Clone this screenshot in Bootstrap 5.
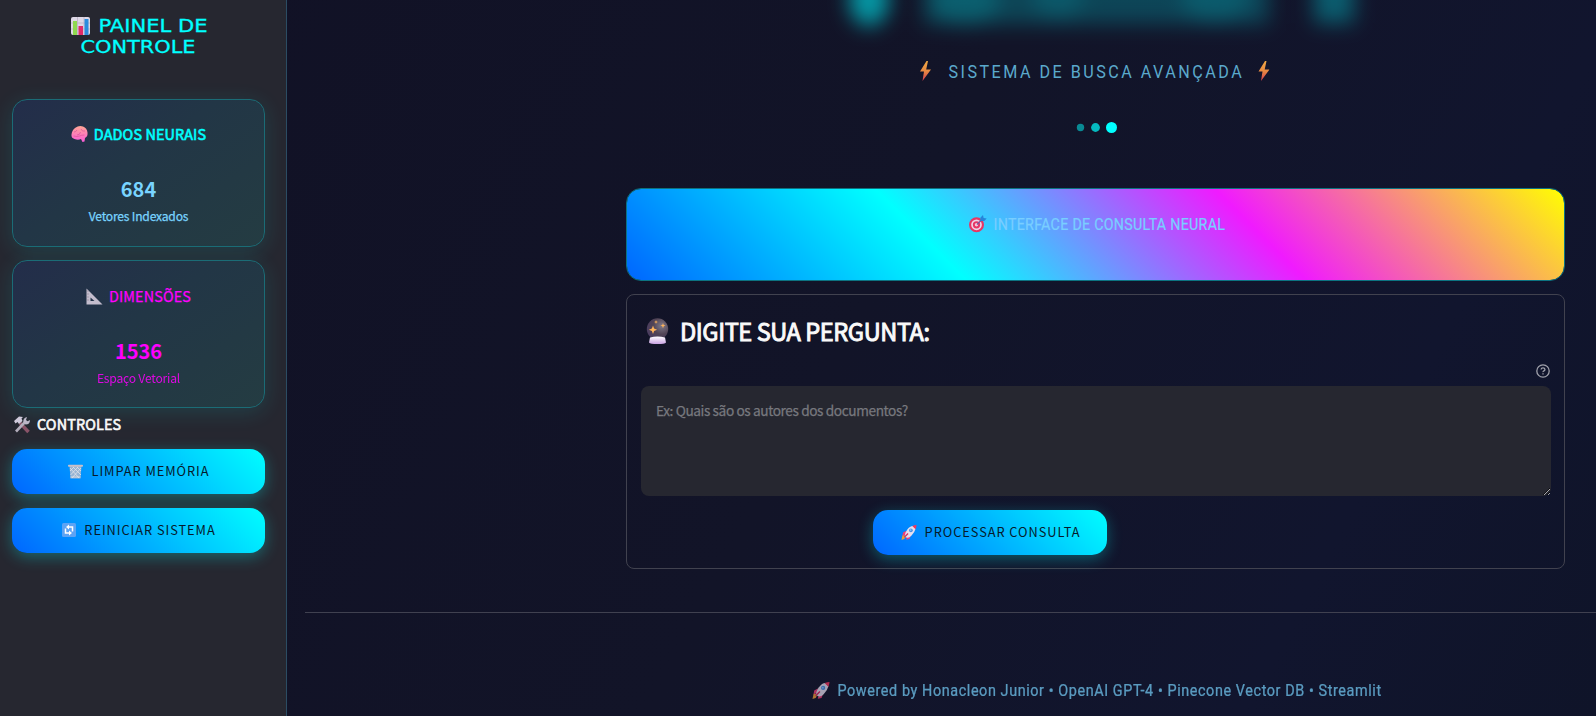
<!DOCTYPE html>
<html lang="pt-BR">
<head>
<meta charset="utf-8">
<meta name="viewport" content="width=device-width, initial-scale=1">
<title>Painel de Controle</title>
<link rel="stylesheet" href="https://cdn.jsdelivr.net/npm/bootstrap@5.3.0/dist/css/bootstrap.min.css">
<style>
html,body{height:100%}
body{margin:0;overflow:hidden;color:#fafafa;font-family:"Noto Sans CJK JP","Noto Sans",sans-serif;
 background:linear-gradient(118deg,#111125 0%,#121428 52%,#11152e 82%,#0f1429 100%)}
svg{display:block;flex:none;overflow:visible}
.fit{font-family:Roboto,"Noto Sans",sans-serif}
.side{width:287px;height:716px;background:#262730;border-right:1px solid #2b4c63;padding:0 21px 0 12px;flex:none}
.side-title{height:99px;padding-top:15px}
.metric{height:148px;border:1px solid #1b6c76;border-radius:15px;padding-top:22px;
 background:linear-gradient(145deg,#232d4a 0%,#223646 45%,#243c42 100%);box-shadow:0 4px 22px rgba(0,255,255,.12)}
.metric+.metric{margin-top:13px;padding-top:23px}
.m-head{height:24px;line-height:24px;font-size:14.4px;gap:6px;letter-spacing:.12px}
.m-val{margin-top:27px;height:32px;line-height:32px;font-size:20px;font-weight:700}
.m-cap{height:20px;line-height:20px;font-size:12.1px;margin-top:1px;letter-spacing:-.2px}
.semi{-webkit-text-stroke:.6px currentColor}
.medium{-webkit-text-stroke:.25px currentColor}
.cy{color:#0ff}.mg{color:#f0f}.sky{color:#79d4ff}
.ctl{height:24px;line-height:24px;margin:4px 0 13px 2px;font-size:14.4px;gap:7px;letter-spacing:.12px}
.neon{height:45px;border:0;border-radius:15px;background:linear-gradient(45deg,#06f,#0ff);color:#061a2b!important;
 box-shadow:0 4px 15px rgba(0,255,255,.3);font-size:12.8px;letter-spacing:.95px;gap:8px;padding:0 0 1px 1px}
.neon+.neon{margin-top:14px}
.stage{flex:1;min-width:0}
.column-main{width:939px;margin-left:339px}
.hero{height:188px;padding-top:58px}
.glow{position:absolute;left:800px;top:0;pointer-events:none}
.banner{height:93px;border:1px solid #0c7381;border-radius:15px;padding-top:26px;
 background:linear-gradient(45deg,#06f 0%,#0ff 33%,#f01aff 66%,#ff0 100%) padding-box}
.ask{height:275px;margin-top:13px;border:1px solid #41424f;border-radius:8px;padding:0 13px 0 14px}
.ask h2{height:40px;line-height:40px;font-size:23.6px;margin:16px 0 0 5px;gap:11px;font-weight:400;letter-spacing:-.42px;-webkit-text-stroke:.95px currentColor}
.help{height:16px;margin-top:13px;padding-right:1px}
.field{height:110px;margin-top:6px;background:#262730!important;border:0;border-radius:8px;padding:12px 15px;color:#fafafa;font-size:13.7px;line-height:24px;resize:vertical;letter-spacing:-.41px}
.field::placeholder{color:#77787e;opacity:1;-webkit-text-stroke:.25px #77787e}
.send{width:234px;margin:14px 0 0 232px}
.rule{height:1px;background:#404150;margin:43px 0 0 18px}
.foot{margin-top:68px;height:20px;opacity:.7}
</style>
</head>
<body class="d-flex">
<svg width="0" height="0" class="position-absolute" aria-hidden="true"><defs>
<linearGradient id="bolt" x1="0" y1="0" x2="0" y2="1"><stop offset="0" stop-color="#f0a843"/><stop offset=".5" stop-color="#e88a42"/><stop offset="1" stop-color="#d33b50"/></linearGradient>
<linearGradient id="brain" x1="0" y1="0" x2="0" y2="1"><stop offset="0" stop-color="#ffa795"/><stop offset="1" stop-color="#fb5bd8"/></linearGradient>
<linearGradient id="base" x1="0" y1="0" x2="0" y2="1"><stop offset="0" stop-color="#fff"/><stop offset="1" stop-color="#c9a2e2"/></linearGradient>
<radialGradient id="orb" cx=".7" cy=".35" r=".8"><stop offset="0" stop-color="#807a88"/><stop offset=".5" stop-color="#514455"/><stop offset="1" stop-color="#493b62"/></radialGradient>
<filter id="soft" x="-30%" y="-100%" width="160%" height="300%"><feGaussianBlur stdDeviation="10"/></filter>
<symbol id="rocket" viewBox="0 0 16 16"><path d="M1 11l4 0-2 4-3 1z" fill="#ee9a37"/><path d="M5 6L1.600 8 1 11.500l4-1.500zM10 11l-1.500 4-3.500 .800 1-4.500z" fill="#ee3f78"/><path d="M3.500 12.500Q3 9 6 5T12 1l3 3q-1 4-4.500 7.500T3.500 12.500z" fill="#e5dfee"/><path d="M11.500 1Q14 0 16 0q0 2-1 4.500z" fill="#f5355e"/><circle cx="10" cy="5.600" r="2" fill="#4b8fe2"/><circle cx="9.700" cy="5.300" r=".9" fill="#8fcaff"/><path d="M3 13l4-4" stroke="#d92861" stroke-width="1.400"/></symbol>
<symbol id="lightning" viewBox="0 0 12 20"><path d="M7.500 0L1 10.500h4L3.500 20 12 8.500H7.200L9 0z" fill="url(#bolt)"/></symbol>
</defs></svg>

<aside class="side">
 <div class="side-title">
  <svg width="253" height="50" viewBox="12 15 253 50" class="fit">
   <rect x="71" y="17" width="19" height="18" rx="2" fill="#ded8e6"/><path d="M71 23h19M71 29h19M77.500 17v18M84 17v18" stroke="#bcb3c6" stroke-width=".8"/>
   <rect x="73" y="21" width="4" height="14" fill="#8fd94f"/><rect x="78.500" y="26" width="4.500" height="9" fill="#e12b69"/><rect x="84.500" y="19" width="4" height="16" fill="#2b8cde"/>
   <g fill="#0ff" stroke="#0ff" stroke-width=".3" font-family="DejaVu Sans" font-size="17.400"><text x="98.500" y="32" textLength="109" lengthAdjust="spacingAndGlyphs">PAINEL DE</text><text x="80.500" y="53" textLength="115" lengthAdjust="spacingAndGlyphs">CONTROLE</text></g>
  </svg>
 </div>
 <div class="metric text-center">
  <div class="m-head d-flex justify-content-center align-items-center cy semi">
   <svg width="17" height="16" viewBox="0 0 17 16"><path d="M3.500 13Q0 12 .5 8.500 1 4 4 2q4-3 8-1.500 4 1.500 4.500 6 .5 4-2.500 5.500l-.5 3.500-2 .5-1.500-3Q7 14.500 3.500 13z" fill="url(#brain)"/><path d="M3 6q2 0 3-2M6 9q3 0 3.500-3M10 3q1 3 4 2M2.500 10q4 1 6 0t5-1" fill="none" stroke="#df599e" stroke-width=".8"/></svg><span>DADOS NEURAIS</span></div>
  <div class="m-val sky">684</div><div class="m-cap sky medium">Vetores Indexados</div>
 </div>
 <div class="metric text-center">
  <div class="m-head d-flex justify-content-center align-items-center mg medium">
   <svg width="17" height="17" viewBox="0 0 17 17"><path d="M.5.500L16.500 16.500H.5zM4.500 9.500v3.500h4z" fill="#c3bdcd" fill-rule="evenodd"/><path d="M1 3h2M1 6h2M1 9h2M1 12h2" stroke="#89828f" stroke-width=".6"/></svg><span>DIMENSÕES</span></div>
  <div class="m-val mg">1536</div><div class="m-cap mg" style="opacity:.85">Espaço Vetorial</div>
 </div>
 <div class="ctl d-flex align-items-center semi">
  <svg width="16" height="17" viewBox="0 0 16 17"><path d="M6 7l8.500 9" stroke="#8a5368" stroke-width="3.400"/><path d="M2 15.500L11 6" stroke="#b3adbb" stroke-width="2.600"/><path d="M9.500 6.500Q8.500 2 13 1l-1 3 1.500 1.300L16 4q0 4.500-4.500 4.500z" fill="#bdb7c8"/><path d="M0 5l5-4.500 4 .5-1.500 1.500 1 2.500L5 8 3.500 6 1.500 7.500z" fill="#d0cadb"/></svg><span>CONTROLES</span></div>
 <button class="btn neon w-100 d-flex justify-content-center align-items-center">
  <svg width="15" height="15" viewBox="0 0 15 15"><path d="M1.500 2h12l-1 12.500h-10z" fill="#97b4d3"/><path d="M2 4l9 10M5 3l8 8M9 3l4 4M13 4L4 14M10 3L2.500 11M6 3L2 7M2.500 13h10" stroke="#e3e2e9" stroke-width=".8"/><rect y=".7" width="15" height="2" rx=".8" fill="#c8c0c9"/></svg><span>LIMPAR MEMÓRIA</span></button>
 <button class="btn neon w-100 d-flex justify-content-center align-items-center">
  <svg width="14" height="14" viewBox="0 0 14 14"><rect width="14" height="14" rx="1.500" fill="#5da3f4"/><path d="M3.500 5.500v4.500H8M10.500 8.500V4H6" fill="none" stroke="#fff" stroke-width="1.500"/><path d="M7 1.500v5L4 4zM7 12.500v-5L10 10z" fill="#fff"/></svg><span>REINICIAR SISTEMA</span></button>
</aside>

<main class="stage">
 <svg class="glow" width="620" height="60" viewBox="800 0 620 60" aria-hidden="true"><g filter="url(#soft)" fill="#00c8d2">
  <ellipse cx="869" cy="0" rx="20" ry="26" opacity=".72"/><rect x="924" y="-30" width="345" height="54" opacity=".27"/><ellipse cx="965" cy="0" rx="34" ry="25" opacity=".2"/><ellipse cx="1058" cy="-4" rx="26" ry="22" opacity=".15"/><ellipse cx="1215" cy="-3" rx="34" ry="25" opacity=".17"/><rect x="1314" y="-30" width="40" height="53" opacity=".4"/></g></svg>
 <div class="column-main">
  <header class="hero">
   <svg width="939" height="90" viewBox="626 58 939 90" class="fit">
    <use href="#lightning" x="919" y="61" width="12" height="20"/><use href="#lightning" x="1257.500" y="61" width="12" height="20"/>
    <text transform="translate(948.500 78.300) scale(.86 1)" font-size="18.800" fill="#5ba9cc" textLength="341">SISTEMA DE BUSCA AVANÇADA</text>
    <g fill="#0ff"><circle cx="1080.500" cy="127.500" r="3.700" opacity=".5"/><circle cx="1095.500" cy="127.500" r="4.400" opacity=".7"/><circle cx="1111.500" cy="127.500" r="5.500"/></g>
   </svg>
  </header>
  <section class="banner">
   <svg width="937" height="22" viewBox="627 215 937 22" class="fit">
    <circle cx="976.500" cy="224.800" r="7.500" fill="#e73665"/><circle cx="976.500" cy="224.800" r="4.500" fill="none" stroke="#efd2e5" stroke-width="1.700"/><circle cx="976.500" cy="224.800" r="1.700" fill="#f4c9db"/><path d="M977 224.500l6-6" stroke="#7457a0" stroke-width="1.200"/><path d="M980 221l.5-3.500 2.500-2.500.6 3 3.100.6-2.500 2.400z" fill="#2684da"/>
    <text transform="translate(993.500 230.200) scale(.88 1)" font-size="16.200" fill="#79ceff" stroke="#79ceff" stroke-width=".25" textLength="263">INTERFACE DE CONSULTA NEURAL</text>
   </svg>
  </section>
  <section class="ask">
   <h2 class="d-flex align-items-center">
    <svg width="23" height="26" viewBox="0 0 23 26"><circle cx="11.500" cy="11" r="10.700" fill="url(#orb)"/><path d="M4 19.500q7.500-2 15 0l1 5q-1 1.500-8.500 1.500T3 24.500z" fill="url(#base)"/><path d="M7 7.500l1.100 3 3 1.200-3 1.200L7 16l-1.100-3.100-3-1.200 3-1.200zM17 5l.7 1.900 1.900.7-1.900.7L17 10.300l-.7-2-1.900-.7 1.900-.7zM10 2l.5 1.500 1.500.5-1.500.5L10 6l-.5-1.500L8 4l1.500-.5z" fill="#ffb45b"/></svg><span>DIGITE SUA PERGUNTA:</span></h2>
   <div class="help d-flex justify-content-end"><svg width="14" height="14" viewBox="0 0 14 14" fill="none" stroke="#a0a1ab" stroke-width="1.300"><circle cx="7" cy="7" r="6.200"/><path d="M5.100 5.500Q5.200 3.900 7 3.900t1.900 1.500Q8.900 6.300 7.900 6.900T7 8.200M7 9.200v1.300"/></svg></div>
   <textarea class="form-control field shadow-none" placeholder="Ex: Quais são os autores dos documentos?"></textarea>
   <button class="btn neon send d-flex justify-content-center align-items-center"><svg width="16" height="15"><use href="#rocket" width="16" height="15"/></svg><span>PROCESSAR CONSULTA</span></button>
  </section>
 </div>
 <div class="rule"></div>
 <footer class="column-main foot">
  <svg width="939" height="20" viewBox="626 681 939 20" class="fit"><use href="#rocket" x="812" y="682" width="18" height="17"/>
   <text transform="translate(837.500 696) scale(.9 1)" font-size="16" fill="#79d4ff" stroke="#79d4ff" stroke-width=".25" textLength="604">Powered by Honacleon Junior • OpenAI GPT-4 • Pinecone Vector DB • Streamlit</text></svg>
 </footer>
</main>
<script src="https://cdn.jsdelivr.net/npm/bootstrap@5.3.0/dist/js/bootstrap.bundle.min.js"></script>
</body>
</html>
